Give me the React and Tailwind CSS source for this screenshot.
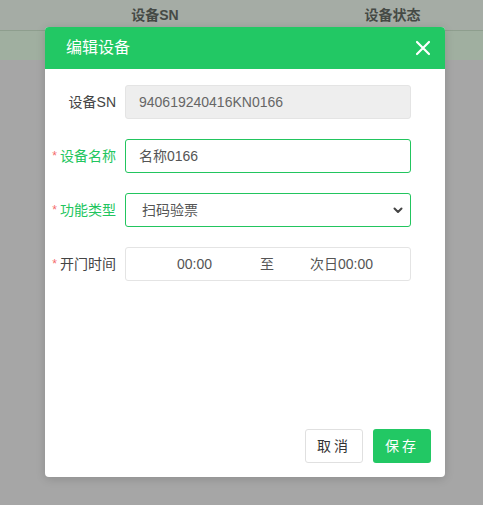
import React from 'react';

const font = { fontFamily: '"Liberation Sans", "Noto Sans CJK SC", sans-serif' };

const Label = ({ children, required, green }) => (
  <div className="w-[80px] h-[34px] pr-[9px] flex items-center justify-end text-[14px] shrink-0">
    {required && <span className="text-[#f56c6c] mr-[3px] text-[12px] leading-none">*</span>}
    <span className={green ? 'text-[#22c55e]' : 'text-[#444]'}>{children}</span>
  </div>
);

const App = () => {
  return (
    <div className="relative w-[483px] h-[505px] overflow-hidden bg-[#a6a6a6]" style={font}>
      <div className="h-[30px] bg-[#a5aca5] flex items-center text-[14px] font-bold text-[#454a45]">
        <div className="w-[310px] text-center">设备SN</div>
        <div className="w-[165px] text-center">设备状态</div>
      </div>
      <div className="h-[30px] bg-[#a0afa0] border-t border-[#8e9e8e]" />

      <div className="absolute left-[45px] top-[27px] w-[400px] h-[450px] bg-white rounded-[4px] overflow-hidden flex flex-col shadow-[0_2px_10px_rgba(0,0,0,0.15)]">
        <div className="h-[42px] bg-[#22c864] flex items-center justify-between pl-[21px] pr-[14px] text-white">
          <span className="text-[16px]">编辑设备</span>
          <svg width="16" height="16" viewBox="0 0 16 16" fill="none" stroke="white" strokeWidth="2.2" strokeLinecap="round">
            <path d="M2 2 L14 14 M14 2 L2 14" />
          </svg>
        </div>
        <div className="flex-1 flex flex-col gap-[20px] pt-[16px]">
          <div className="flex">
            <Label>设备SN</Label>
            <div className="w-[286px] h-[34px] bg-[#eeeeee] border border-[#e4e4e4] rounded-[3px] px-[13px] flex items-center text-[14px] text-[#666]">
              940619240416KN0166
            </div>
          </div>
          <div className="flex">
            <Label required green>设备名称</Label>
            <div className="w-[286px] h-[34px] border border-[#22c55e] rounded-[3px] px-[13px] flex items-center text-[14px] text-[#555]">
              名称0166
            </div>
          </div>
          <div className="flex">
            <Label required green>功能类型</Label>
            <div className="w-[286px] h-[34px] border border-[#22c55e] rounded-[3px] pl-[16px] pr-[6px] flex items-center justify-between text-[14px] text-[#555]">
              <span>扫码验票</span>
              <svg width="12" height="12" viewBox="0 0 12 12" fill="none" stroke="#444" strokeWidth="2" strokeLinecap="round" strokeLinejoin="round">
                <path d="M2.5 4.5 L6 8 L9.5 4.5" />
              </svg>
            </div>
          </div>
          <div className="flex">
            <Label required>开门时间</Label>
            <div className="w-[286px] h-[34px] border border-[#e4e4e4] rounded-[3px] pl-[51px] flex items-center text-[14px] text-[#555]">
              <span>00:00</span>
              <span className="ml-[48px]">至</span>
              <span className="ml-[36px]">次日00:00</span>
            </div>
          </div>
        </div>
        <div className="flex justify-end gap-[10px] pr-[14px] pb-[14px]">
          <button className="w-[58px] h-[34px] border border-[#e0e0e0] rounded-[3px] bg-white text-[14px] text-[#333] tracking-[3px]">
            取消
          </button>
          <button className="w-[58px] h-[34px] rounded-[3px] bg-[#22c864] text-white text-[14px] tracking-[3px]">
            保存
          </button>
        </div>
      </div>
    </div>
  );
};

export default App;
